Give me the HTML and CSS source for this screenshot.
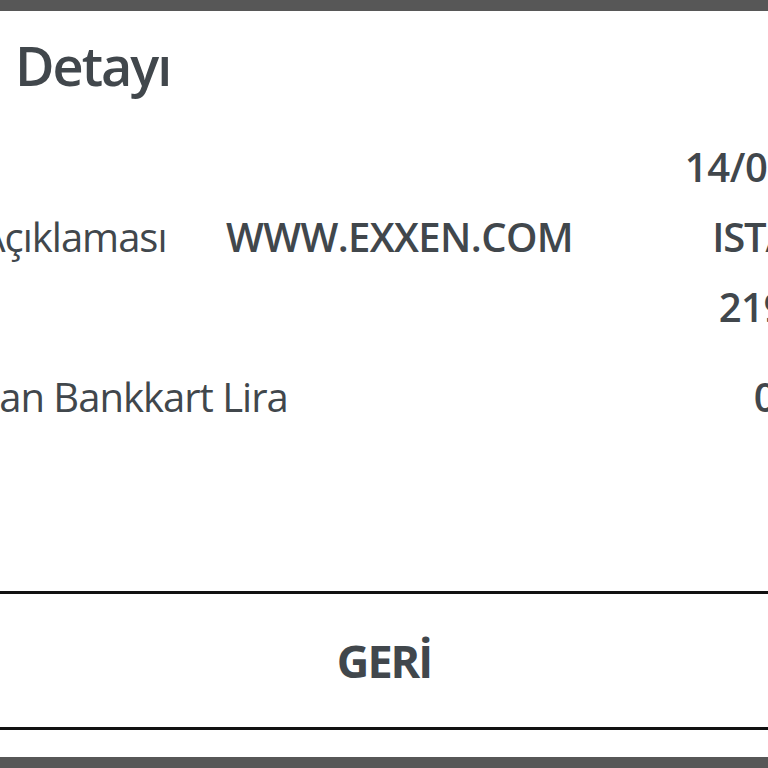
FILE: index.html
```html
<!DOCTYPE html>
<html lang="tr">
<head>
<meta charset="utf-8">
<title>İşlem Detayı</title>
<link rel="stylesheet" href="styles.css">
</head>
<body>
<div class="topbar"></div>
<main class="dialog">
  <h1 class="title">Detayı</h1>
  <div class="rows">
    <div class="row">
      <span class="label">Tarih</span>
      <span class="mid"></span>
      <span class="value">14/03/2021</span>
    </div>
    <div class="row">
      <span class="label">İşlem Açıklaması</span>
      <span class="mid">WWW.EXXEN.COM</span>
      <span class="value value-narrow">ISTANBUL</span>
    </div>
    <div class="row">
      <span class="label">Tutar</span>
      <span class="mid"></span>
      <span class="value">219,99 TL</span>
    </div>
    <div class="row row-gap">
      <span class="label label-long">Kullanılan Bankkart Lira</span>
      <span class="mid"></span>
      <span class="value value-wide">0,00 TL</span>
    </div>
  </div>
  <div class="actions">
    <button class="btn" type="button">GERİ</button>
  </div>
</main>
<div class="bottombar"></div>
</body>
</html>
```
FILE: styles.css
```css
html, body {
  margin: 0;
  padding: 0;
  background: #ffffff;
  overflow: hidden;
  width: 768px;
  height: 768px;
}
body {
  font-family: "Open Sans", "Liberation Sans", sans-serif;
  color: #41474c;
  display: flex;
  flex-direction: column;
}
.topbar {
  height: 11px;
  background: #575757;
  flex: none;
}
.dialog {
  flex: 1;
  display: flex;
  flex-direction: column;
  overflow: hidden;
}
.title {
  margin: 27px 0 0 15px;
  font-size: 54px;
  line-height: 54px;
  font-weight: 600;
  letter-spacing: -2px;
}
.rows {
  margin: 40px 0 0 -124px;
  width: 1024px;
  display: flex;
  flex-direction: column;
}
.row {
  display: grid;
  grid-template-columns: 350px 345px 324px;
  height: 70px;
  line-height: 70px;
  font-size: 40px;
  white-space: nowrap;
}
.row-gap {
  margin-top: 20px;
}
.label {
  font-weight: 400;
  letter-spacing: -1px;
}
.label-long {
  margin-left: -5px;
}
.mid {
  font-weight: 600;
  letter-spacing: -0.6px;
}
.value {
  font-weight: 600;
  text-align: right;
  letter-spacing: -0.4px;
}
.value-narrow {
  letter-spacing: -1.2px;
}
.value-wide {
  letter-spacing: 1px;
}
.actions {
  margin-top: auto;
  margin-bottom: 27px;
  border-top: 3px solid #111111;
  border-bottom: 3px solid #111111;
}
.btn {
  display: block;
  width: 100%;
  height: 133px;
  border: 0;
  background: #ffffff;
  font-family: "Open Sans", "Liberation Sans", sans-serif;
  font-size: 45px;
  line-height: 133px;
  font-weight: 700;
  color: #41474c;
  padding: 0;
  letter-spacing: -2px;
}
.bottombar {
  height: 11px;
  background: #575757;
  flex: none;
}
```
